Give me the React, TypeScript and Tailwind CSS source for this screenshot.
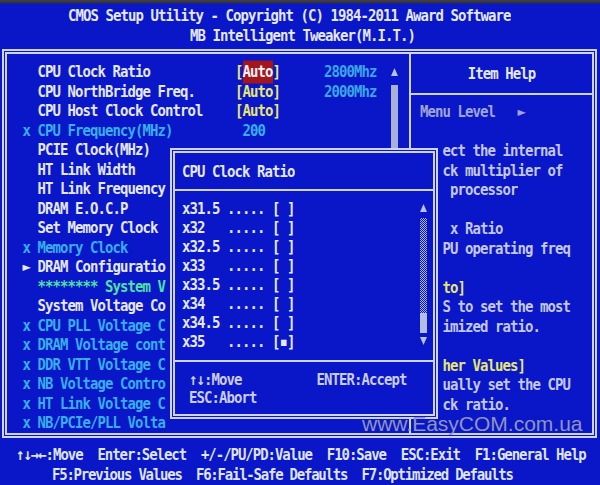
import type { ReactNode } from "react";

// BIOS text colours
const WH = "text-[#e4e8f8]";
const CY = "text-[#36afeb]";
const GR = "text-[#4ee2a4]";
const YE = "text-[#e6e673]";
const GY = "text-[#c3c8ea]";
const DIM = "text-[#9ea5d6]";

type RowProps = { children?: ReactNode; className?: string };

// one text line of the 80x25 screen
const Row = ({ children, className = "" }: RowProps) => (
  <div className={`h-[19.5px] leading-[19.5px] whitespace-pre scale-y-[1.15] ${className}`}>
    {children}
  </div>
);

const PopRow = ({ children, className = "" }: RowProps) => (
  <div className={`h-[19.1px] leading-[19.1px] whitespace-pre scale-y-[1.15] ${className}`}>
    {children}
  </div>
);

const Up = () => (
  <svg width="7" height="8" viewBox="0 0 7 8">
    <polygon points="3.5,0 7,8 0,8" fill="#b8c0e4" />
  </svg>
);

const Down = () => (
  <svg width="7" height="8" viewBox="0 0 7 8">
    <polygon points="0,0 7,0 3.5,8" fill="#b8c0e4" />
  </svg>
);

interface Item {
  m?: string;
  label: string;
  c: string;
  value?: ReactNode;
  extra?: string;
}

const auto = <span className={YE}>[Auto]</span>;

const items: Item[] = [
  {
    label: "CPU Clock Ratio",
    c: WH,
    value: (
      <>
        <span className={YE}>[</span>
        <span className="inline-block h-[19.5px] bg-[#a3171c] text-[#f2f2fa]">Auto</span>
        <span className={YE}>]</span>
      </>
    ),
    extra: "2800Mhz",
  },
  { label: "CPU NorthBridge Freq.", c: WH, value: auto, extra: "2000Mhz" },
  { label: "CPU Host Clock Control", c: WH, value: auto },
  { m: "x", label: "CPU Frequency(MHz)", c: CY, value: <span className={CY}> 200</span> },
  { label: "PCIE Clock(MHz)", c: WH },
  { label: "HT Link Width", c: WH },
  { label: "HT Link Frequency", c: WH },
  { label: "DRAM E.O.C.P", c: WH },
  { label: "Set Memory Clock", c: WH },
  { m: "x", label: "Memory Clock", c: CY },
  { m: "►", label: "DRAM Configuratio", c: WH },
  { label: "******** System V", c: GR },
  { label: "System Voltage Co", c: WH },
  { m: "x", label: "CPU PLL Voltage C", c: CY },
  { m: "x", label: "DRAM Voltage cont", c: CY },
  { m: "x", label: "DDR VTT Voltage C", c: CY },
  { m: "x", label: "NB Voltage Contro", c: CY },
  { m: "x", label: "HT Link Voltage C", c: CY },
  { m: "x", label: "NB/PCIe/PLL Volta", c: CY },
];

// help lines, the left part is covered by the popup
const help: { t: string; c: string }[] = [
  { t: "", c: GY },
  { t: "   ect the internal", c: GY },
  { t: "   ck multiplier of", c: GY },
  { t: "    processor", c: GY },
  { t: "", c: GY },
  { t: "    x Ratio", c: GY },
  { t: "   PU operating freq", c: GY },
  { t: "", c: GY },
  { t: "   to]", c: YE },
  { t: "   S to set the most", c: GY },
  { t: "   imized ratio.", c: GY },
  { t: "", c: GY },
  { t: "   her Values]", c: YE },
  { t: "   ually set the CPU", c: GY },
  { t: "   ck ratio.", c: GY },
];

const ratios = ["x31.5", "x32", "x32.5", "x33", "x33.5", "x34", "x34.5", "x35"];

export default function App() {
  return (
    <div className="relative w-[600px] h-[485px] overflow-hidden bg-[#0a17c9] font-['DejaVu_Sans_Mono',monospace] font-bold text-[14px] tracking-[-0.93px]">
      <div className="h-[4px] bg-gradient-to-b from-[#4a3f33] to-[#1d2270]" />

      {/* TITLE */}
      <div className={`pt-[1px] ${WH}`}>
        <div className="h-[20px] leading-[20px] pl-[68px] whitespace-pre scale-y-[1.15]">
          CMOS Setup Utility - Copyright (C) 1984-2011 Award Software
        </div>
        <div className="h-[20px] leading-[20px] pl-[190px] whitespace-pre scale-y-[1.15]">
          MB Intelligent Tweaker(M.I.T.)
        </div>
      </div>

      {/* MAIN FRAME */}
      <div className="mt-[4px] ml-[2px] w-[595px] h-[389px] border-[5px] border-double border-[#cdd3f0] flex">
        <div className="w-[402px] flex pt-[8.25px] pl-[15.5px]">
          <div className="flex-1">
            {items.map((it) => (
              <Row key={it.label} className="flex">
                <span className={`w-[15px] ${it.m === "►" ? WH : CY}`}>{it.m ?? ""}</span>
                <span className={`w-[197.5px] ${it.c}`}>{it.label}</span>
                <span className="w-[89px]">{it.value}</span>
                <span className="text-[#3aa6e6]">{it.extra}</span>
              </Row>
            ))}
          </div>
          <div className="w-[8px] mr-[11px] flex flex-col items-center">
            <div className="h-[19.5px] flex items-center">
              <Up />
            </div>
            <div className="mt-[3px] w-[7px] h-[140px] bg-[#a7b1d8]" />
          </div>
        </div>

        <div className="w-[2px] bg-[#cdd3f0]" />

        <div className="flex-1 flex flex-col">
          <div className={`h-[39px] flex items-center justify-center ${WH}`}>
            <span className="scale-y-[1.15]">Item Help</span>
          </div>
          <div className="h-[2px] bg-[#cdd3f0]" />
          <div className="pt-[7.25px] pl-[9px]">
            <Row className={DIM}>Menu Level   ►</Row>
            {help.map((h, i) => (
              <Row key={i} className={h.c}>
                {h.t}
              </Row>
            ))}
          </div>
        </div>
      </div>

      {/* KEY HELP */}
      <div className="mt-[7px] text-[#dfe3f5]">
        <Row className="pl-[16px] tracking-[-1.03px]">
          ↑↓→←:Move  Enter:Select  +/-/PU/PD:Value  F10:Save  ESC:Exit  F1:General Help
        </Row>
        <Row className="pl-[52px] tracking-[-1.23px]">
          F5:Previous Values  F6:Fail-Safe Defaults  F7:Optimized Defaults
        </Row>
      </div>

      {/* POPUP */}
      <div className="absolute left-[170px] top-[148px] w-[268px] h-[271px] border-[5px] border-double border-[#cdd3f0] bg-[#0a17c9] flex flex-col">
        <div className={`h-[36px] pl-[7px] flex items-center ${WH}`}>
          <span className="scale-y-[1.15]">CPU Clock Ratio</span>
        </div>
        <div className="h-[2px] bg-[#cdd3f0]" />
        <div className="h-[169px] flex">
          <div className={`flex-1 pl-[7px] pt-[7.7px] ${WH}`}>
            {ratios.map((r, i) => (
              <PopRow key={r}>
                {r.padEnd(6, " ")}..... [{i === ratios.length - 1 ? "▪" : " "}]
              </PopRow>
            ))}
          </div>
          <div className="w-[8px] mr-[6px] pt-[7.7px] flex flex-col items-center">
            <div className="h-[19.1px] flex items-center">
              <Up />
            </div>
            <div className="w-[7px] h-[95px] bg-[repeating-conic-gradient(#aab4dc_0_25%,#0a17c9_0_50%)] bg-[length:2px_2px]" />
            <div className="w-[7px] h-[20px] bg-[#b4bde2]" />
            <div className="h-[16px] flex items-center">
              <Down />
            </div>
          </div>
        </div>
        <div className="h-[2px] bg-[#cdd3f0]" />
        <div className="pt-[8px] pl-[14px] text-[#c9cdee]">
          <div className="h-[18px] leading-[18px] whitespace-pre scale-y-[1.15]">
            ↑↓:Move          ENTER:Accept
          </div>
          <div className="h-[18px] leading-[18px] whitespace-pre scale-y-[1.15]">ESC:Abort</div>
        </div>
      </div>

      {/* WATERMARK */}
      <div className="absolute left-[362px] top-[414px] text-[21px] leading-[19px] font-['Liberation_Sans',sans-serif] font-normal tracking-normal text-[#8f95ba]">
        www.EasyCOM.com.ua
      </div>
    </div>
  );
}
